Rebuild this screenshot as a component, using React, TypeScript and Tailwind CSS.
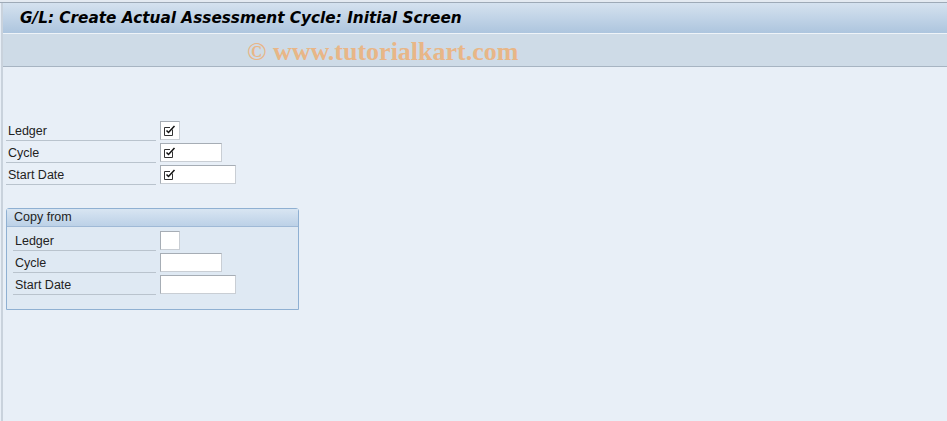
import React from "react";

const Check = () => (
  <svg width="12" height="11" viewBox="0 0 12 11" className="block">
    <path d="M8.5 4.5 V10.5 H0.5 V2.5 H6" fill="none" stroke="#333" strokeWidth="1" />
    <path d="M2.5 5.5 L4.5 7.5 L10.5 1" fill="none" stroke="#111" strokeWidth="1.5" />
  </svg>
);

const Field = ({ w, checked }: { w: string; checked?: boolean }) => (
  <div
    className={`${w} h-[19px] bg-white border border-[#a6adb5] border-b-[#c9ced4] border-r-[#c9ced4] flex items-center pl-[3px]`}
  >
    {checked ? <Check /> : null}
  </div>
);

const Row = ({ label, w, checked, lw }: { label: string; w: string; checked?: boolean; lw: string }) => (
  <div className="flex items-center h-[22px]">
    <div className={`${lw} h-[22px] border-b border-[#b9c3cd] flex items-end pb-[3px] pl-[2px]`}>
      <span className="text-[12.5px] text-[#222] leading-none">{label}</span>
    </div>
    <div className="ml-[4px]">
      <Field w={w} checked={checked} />
    </div>
  </div>
);

export default function App() {
  return (
    <div
      className="w-[947px] h-[421px] bg-[#e8eff7] overflow-hidden flex flex-col"
      style={{ fontFamily: '"Liberation Sans", Tahoma, sans-serif' }}
    >
      <div className="h-[3px] bg-[#e4eaf1] border-b border-[#9eaab7] shrink-0" />
      <div className="flex flex-col border-l-[2px] border-[#c9d2dc] ml-[1px] flex-1">
        <div className="h-[31px] bg-gradient-to-b from-[#d5e2ef] to-[#adc5de] flex items-center pl-[17px] border-b border-[#eef3f8] shrink-0">
          <span
            className="text-[15.3px] font-bold italic text-[#000]"
            style={{ fontFamily: '"DejaVu Sans", Verdana, sans-serif' }}
          >
            G/L: Create Actual Assessment Cycle: Initial Screen
          </span>
        </div>
        <div className="h-[33px] bg-[#cedbe7] border-b border-[#a7b4c2] flex items-center pl-[244px] pt-[4px] shrink-0">
          <span
            className="text-[26px] leading-none font-bold text-[#e8b687]"
            style={{ fontFamily: '"Liberation Serif", serif' }}
          >
            © www.tutorialkart.com
          </span>
        </div>
        <div className="pl-[3px] pt-[52px] flex flex-col">
          <div className="flex flex-col">
            <Row label="Ledger" w="w-[20px]" checked lw="w-[150px]" />
            <Row label="Cycle" w="w-[62px]" checked lw="w-[150px]" />
            <Row label="Start Date" w="w-[76px]" checked lw="w-[150px]" />
          </div>
          <div className="mt-[23px] w-[293px] border border-[#8fb0d2] rounded-t-[3px] bg-[#dfe9f3] pb-[14px]">
            <div className="h-[18px] bg-gradient-to-b from-[#d8e5f2] to-[#bcd1e7] border-b border-[#9fb9d6] flex items-center pl-[7px]">
              <span className="text-[12.5px] text-[#222] leading-none">Copy from</span>
            </div>
            <div className="pl-[6px] pt-[2px] flex flex-col">
              <Row label="Ledger" w="w-[20px]" lw="w-[143px]" />
              <Row label="Cycle" w="w-[62px]" lw="w-[143px]" />
              <Row label="Start Date" w="w-[76px]" lw="w-[143px]" />
            </div>
          </div>
        </div>
      </div>
    </div>
  );
}
